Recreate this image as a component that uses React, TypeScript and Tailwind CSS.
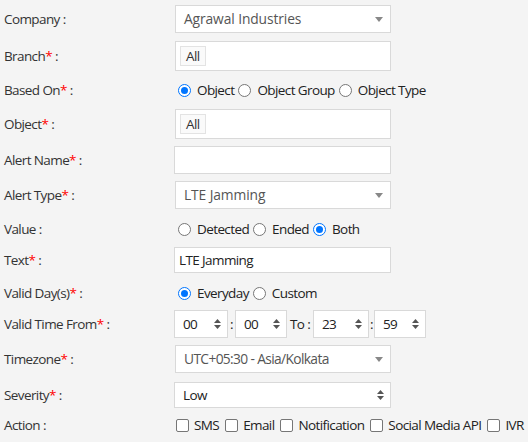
import React from "react";

const Star = () => <span className="text-[#ff0000]">*</span>;

function Label({ text, req }: { text: string; req?: boolean }) {
  return (
    <div className="w-[170px] shrink-0 pl-[4px] text-[#333] whitespace-nowrap">
      {text}
      {req && <Star />}
      {" :"}
    </div>
  );
}

function Radio({ checked }: { checked?: boolean }) {
  return checked ? (
    <span className="w-[13px] h-[13px] rounded-full border border-[#0075ff] bg-white flex items-center justify-center shrink-0">
      <span className="w-[7px] h-[7px] rounded-full bg-[#0075ff]" />
    </span>
  ) : (
    <span className="w-[13px] h-[13px] rounded-full border border-[#767676] bg-white shrink-0" />
  );
}

function Check() {
  return <span className="w-[13px] h-[13px] rounded-[2px] border border-[#767676] bg-white shrink-0" />;
}

function Caret() {
  return (
    <svg width="8" height="5" viewBox="0 0 8 5" className="shrink-0">
      <path d="M0 0 L8 0 L4 5 Z" fill="#888" />
    </svg>
  );
}

function UpDown() {
  return (
    <svg width="7" height="10" viewBox="0 0 7 10" className="shrink-0">
      <path d="M0 4 L7 4 L3.5 0 Z" fill="#555" />
      <path d="M0 6 L7 6 L3.5 10 Z" fill="#555" />
    </svg>
  );
}

function Select2({ value, tight }: { value: string; tight?: boolean }) {
  return (
    <div className="ml-[5px] w-[216px] h-[28px] bg-white border border-[#d9d9d9] flex items-center pl-[8px] pr-[7px] text-[#555] text-[13.8px] tracking-[-0.1px]">
      <span className={tight ? "flex-1 whitespace-nowrap tracking-[-0.65px]" : "flex-1 whitespace-nowrap"}>{value}</span>
      <Caret />
    </div>
  );
}

function Tags() {
  return (
    <div className="ml-[5px] w-[216px] h-[30px] bg-white border border-[#d9d9d9] flex items-center pl-[4px]">
      <span className="h-[20px] px-[5px] border border-[#e3e3e3] bg-[#fafafa] flex items-center text-[#333]">All</span>
    </div>
  );
}

function TextBox({ value, h }: { value?: string; h: string }) {
  return (
    <div className={`ml-[4px] w-[217px] ${h} bg-white border border-[#d9d9d9] flex items-center pl-[4px] text-[#222]`}>
      {value}
    </div>
  );
}

function TimeBox({ v, w }: { v: string; w: string }) {
  return (
    <div className={`${w} h-[28px] bg-white border border-[#d9d9d9] flex items-center pl-[8px] pr-[6px] text-[#222]`}>
      <span className="flex-1">{v}</span>
      <UpDown />
    </div>
  );
}

function RadioItem({ label, checked }: { label: string; checked?: boolean }) {
  return (
    <span className="flex items-center gap-[6px] mr-[4px] whitespace-nowrap">
      <Radio checked={checked} />
      <span className="text-[#222]">{label}</span>
    </span>
  );
}

function CheckItem({ label }: { label: string }) {
  return (
    <span className="flex items-center gap-[5px] mr-[6px] whitespace-nowrap">
      <Check />
      <span className="text-[#222]">{label}</span>
    </span>
  );
}

export default function App() {
  return (
    <div
      className="w-[528px] h-[442px] bg-[#f4f4f4] text-[13.5px] tracking-[-0.6px] leading-[18px] overflow-hidden pt-[5px]"
      style={{ fontFamily: "'Open Sans', 'Noto Sans', sans-serif" }}
    >
      <div className="flex items-center h-[28px]">
        <Label text="Company" />
        <Select2 value="Agrawal Industries" />
      </div>
      <div className="flex items-center h-[30px] mt-[8px]">
        <Label text="Branch" req />
        <Tags />
      </div>
      <div className="flex items-center h-[20px] mt-[9px]">
        <Label text="Based On" req />
        <div className="flex items-center pl-[8px]">
          <RadioItem label="Object" checked />
          <RadioItem label="Object Group" />
          <RadioItem label="Object Type" />
        </div>
      </div>
      <div className="flex items-center h-[29px] mt-[9px]">
        <Label text="Object" req />
        <Tags />
      </div>
      <div className="flex items-center h-[28px] mt-[8px]">
        <Label text="Alert Name" req />
        <TextBox h="h-[28px]" />
      </div>
      <div className="flex items-center h-[28px] mt-[7px]">
        <Label text="Alert Type" req />
        <Select2 value="LTE Jamming" />
      </div>
      <div className="flex items-center h-[20px] mt-[10px]">
        <Label text="Value" />
        <div className="flex items-center pl-[8px]">
          <RadioItem label="Detected" />
          <RadioItem label="Ended" />
          <RadioItem label="Both" checked />
        </div>
      </div>
      <div className="flex items-center h-[26px] mt-[8px]">
        <Label text="Text" req />
        <TextBox h="h-[26px]" value="LTE Jamming" />
      </div>
      <div className="flex items-center h-[20px] mt-[10px]">
        <Label text="Valid Day(s)" req />
        <div className="flex items-center pl-[8px]">
          <RadioItem label="Everyday" checked />
          <RadioItem label="Custom" />
        </div>
      </div>
      <div className="flex items-center h-[28px] mt-[7px]">
        <Label text="Valid Time From" req />
        <div className="flex items-center pl-[4px] text-[#222]">
          <TimeBox v="00" w="w-[54px]" />
          <span className="w-[7px] text-center">:</span>
          <TimeBox v="00" w="w-[52px]" />
          <span className="w-[26px] text-center whitespace-nowrap">To :</span>
          <TimeBox v="23" w="w-[56px]" />
          <span className="w-[5px] text-center">:</span>
          <TimeBox v="59" w="w-[52px]" />
        </div>
      </div>
      <div className="flex items-center h-[28px] mt-[7px]">
        <Label text="Timezone" req />
        <Select2 value="UTC+05:30 - Asia/Kolkata" tight />
      </div>
      <div className="flex items-center h-[26px] mt-[9px]">
        <Label text="Severity" req />
        <div className="ml-[4px] w-[217px] h-[26px] bg-white border border-[#d9d9d9] flex items-center pl-[8px] pr-[6px] text-[#222]">
          <span className="flex-1">Low</span>
          <UpDown />
        </div>
      </div>
      <div className="flex items-center h-[20px] mt-[7px]">
        <Label text="Action" />
        <div className="flex items-center pl-[6px]">
          <CheckItem label="SMS" />
          <CheckItem label="Email" />
          <CheckItem label="Notification" />
          <CheckItem label="Social Media API" />
          <CheckItem label="IVR" />
        </div>
      </div>
    </div>
  );
}
